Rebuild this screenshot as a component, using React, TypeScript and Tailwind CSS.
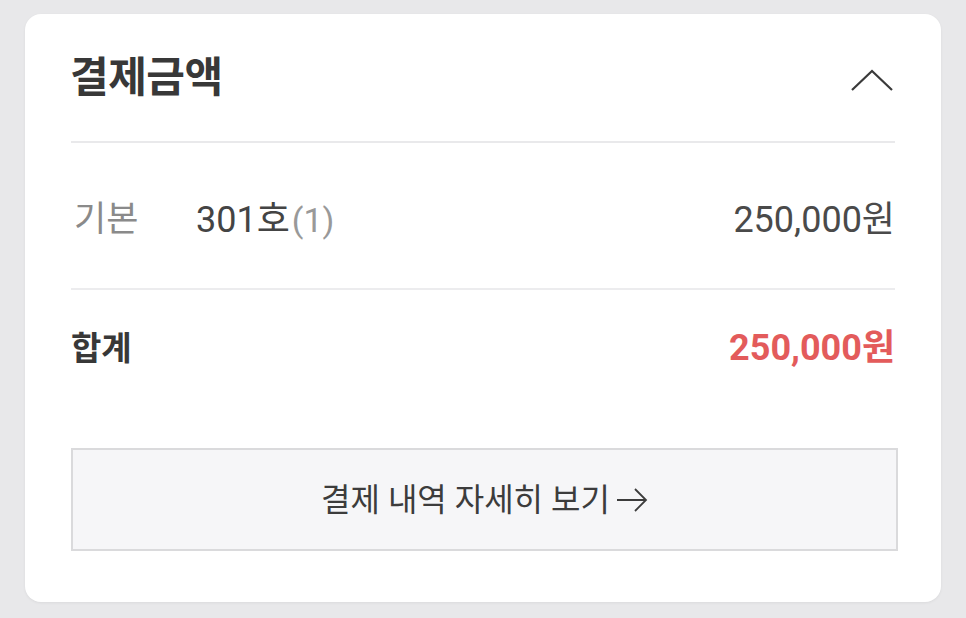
import React from "react";

export default function App() {
  const font = { fontFamily: 'Roboto, "Noto Sans CJK KR", sans-serif' };
  return (
    <div className="w-[966px] h-[618px] bg-[#e8e8ea] pt-[14px] pl-[25px] overflow-hidden" style={font}>
      <div className="w-[916px] h-[588px] bg-white rounded-[16px] shadow-[0_1px_3px_rgba(0,0,0,0.06)] px-[46px] flex flex-col">
        <div className="h-[129px] flex items-center justify-between border-b-2 border-[#e9e9eb]">
          <div className="text-[42px] font-bold text-[#383838] tracking-[-0.5px] leading-none -ml-[1px]">결제금액</div>
          <svg width="44" height="24" viewBox="0 0 44 24" className="mr-[1px] mt-[4px]">
            <polyline points="2,22 22,3 42,22" fill="none" stroke="#3a3a3a" strokeWidth="2.2" />
          </svg>
        </div>
        <div className="h-[147px] flex items-center justify-between border-b-2 border-[#ececee] pt-[8px]">
          <div className="flex items-center leading-none">
            <span className="w-[125px] text-[35px] text-[#8a8a8a] pl-[3px]">기본</span>
            <span className="text-[36px] text-[#444]">301호</span>
            <span className="text-[34px] text-[#999] ml-[2px]">(1)</span>
          </div>
          <div className="text-[36px] text-[#4a4a4a] leading-none">250,000원</div>
        </div>
        <div className="h-[118px] flex items-center justify-between pb-[2px]">
          <div className="text-[33px] font-bold text-[#383838] leading-none">합계</div>
          <div className="text-[36px] font-bold text-[#e35b5b] leading-none">250,000원</div>
        </div>
        <div className="mt-[40px] -mr-[3px] h-[103px] bg-[#f6f6f8] border-2 border-[#dadadc] flex items-center justify-center">
          <span className="text-[32px] text-[#3c3c3c] leading-none">결제 내역 자세히 보기</span>
          <svg width="32" height="26" viewBox="0 0 32 26" className="ml-[6px]">
            <path d="M1 13 H30 M19 2 L30 13 L19 24" fill="none" stroke="#3c3c3c" strokeWidth="1.8" />
          </svg>
        </div>
      </div>
    </div>
  );
}
